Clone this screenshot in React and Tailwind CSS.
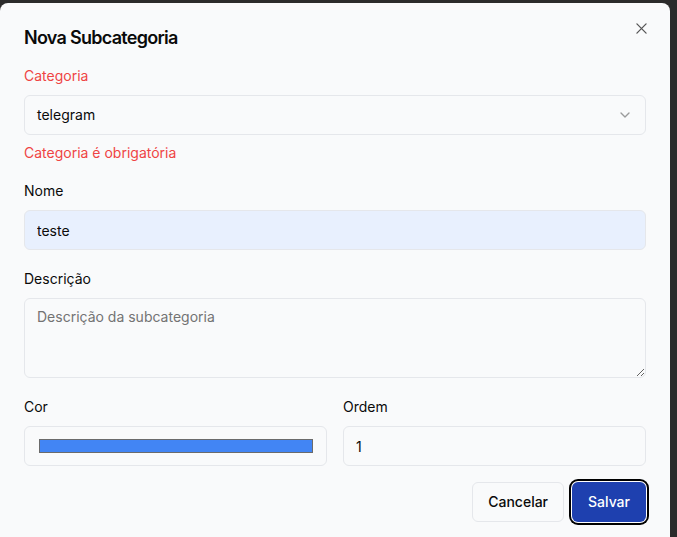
import React from 'react';

const Label = ({ children, red }) => (
  <label className={`block text-sm leading-5 font-normal mb-[9px] ${red ? 'text-[#ef4444]' : 'text-[#0a0a0a]'}`}>
    {children}
  </label>
);

const App = () => {
  return (
    <div
      className="w-[677px] h-[537px] overflow-hidden bg-[#2b2b2b] pt-[3px]"
      style={{ fontFamily: 'Inter, "Liberation Sans", sans-serif' }}
    >
      <div className="relative w-[670px] h-[560px] rounded-lg bg-[#f9fafb] px-6 pt-[21px]">
        {/* Close */}
        <button className="absolute right-[19px] top-[15px] w-5 h-5 flex items-center justify-center text-[#555]">
          <svg width="11" height="11" viewBox="0 0 12 12" fill="none" stroke="currentColor" strokeWidth="1.4" strokeLinecap="round">
            <path d="M1 1 L11 11 M11 1 L1 11" />
          </svg>
        </button>

        <h2 className="text-lg leading-7 font-semibold text-[#0a0a0a] tracking-[-0.04em]">Nova Subcategoria</h2>

        {/* Categoria */}
        <div className="mt-[14px]">
          <Label red>Categoria</Label>
          <div className="h-10 w-full flex items-center justify-between rounded-md border border-[#e5e7eb] bg-[#f9fafb] px-3 text-sm text-[#0a0a0a]">
            <span>telegram</span>
            <svg width="16" height="16" viewBox="0 0 24 24" fill="none" stroke="#737373" strokeWidth="2" strokeLinecap="round" strokeLinejoin="round" className="opacity-70">
              <path d="m6 9 6 6 6-6" />
            </svg>
          </div>
          <p className="mt-2 text-sm leading-5 text-[#ef4444]">Categoria é obrigatória</p>
        </div>

        {/* Nome */}
        <div className="mt-[18px]">
          <Label>Nome</Label>
          <input
            readOnly
            value="teste"
            className="h-10 w-full rounded-md border border-[#e5e7eb] bg-[#e8f0fe] px-3 text-sm text-[#0a0a0a] outline-none"
          />
        </div>

        {/* Descrição */}
        <div className="mt-[19px]">
          <Label>Descrição</Label>
          <textarea
            placeholder="Descrição da subcategoria"
            className="block h-20 w-full rounded-md border border-[#e5e7eb] bg-[#f9fafb] px-3 py-2 text-sm leading-5 text-[#0a0a0a] placeholder:text-[#737373] outline-none"
          />
        </div>

        {/* Cor / Ordem */}
        <div className="mt-[19px] grid grid-cols-2 gap-4">
          <div>
            <Label>Cor</Label>
            <div className="h-10 w-full flex items-center rounded-md border border-[#e5e7eb] bg-[#f9fafb] pl-[14px] pr-[13px]">
              <div className="h-[14px] w-full bg-[#4285f4] border border-[#6b6b6b]" />
            </div>
          </div>
          <div>
            <Label>Ordem</Label>
            <input
              readOnly
              value="1"
              className="h-10 w-full rounded-md border border-[#e5e7eb] bg-[#f9fafb] px-3 text-sm text-[#0a0a0a] outline-none"
            />
          </div>
        </div>

        {/* Actions */}
        <div className="mt-4 flex justify-end gap-2">
          <button className="h-10 px-[15px] rounded-md border border-[#e5e7eb] bg-[#f9fafb] text-sm font-medium text-[#0a0a0a]">
            Cancelar
          </button>
          <button className="h-10 px-4 rounded-md bg-[#1e40af] text-sm font-medium text-white ring-2 ring-black ring-offset-1 ring-offset-white">
            Salvar
          </button>
        </div>
      </div>
    </div>
  );
};

export default App;
